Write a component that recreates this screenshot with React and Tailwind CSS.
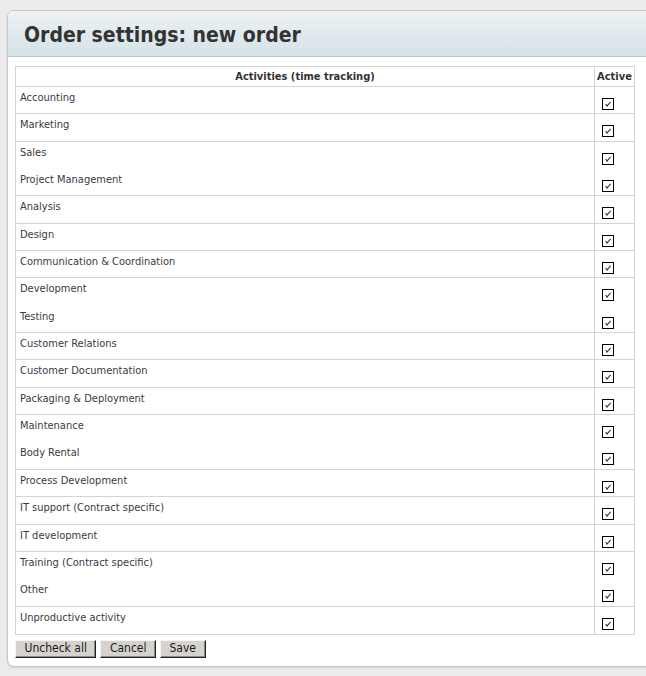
import React from "react";

const groups = [
  ["Accounting"],
  ["Marketing"],
  ["Sales", "Project Management"],
  ["Analysis"],
  ["Design"],
  ["Communication & Coordination"],
  ["Development", "Testing"],
  ["Customer Relations"],
  ["Customer Documentation"],
  ["Packaging & Deployment"],
  ["Maintenance", "Body Rental"],
  ["Process Development"],
  ["IT support (Contract specific)"],
  ["IT development"],
  ["Training (Contract specific)", "Other"],
  ["Unproductive activity"],
];

const font = { fontFamily: '"DejaVu Sans Condensed", "DejaVu Sans", sans-serif', fontStretch: "condensed" };

function Check() {
  return (
    <svg width="12" height="12" viewBox="0 0 12 12" className="block">
      <rect x="0.5" y="0.5" width="11" height="11" fill="#fff" stroke="#000" strokeWidth="1" />
      <path d="M3.5 6.2 L5.2 7.8 L8.6 3.8" fill="none" stroke="#333" strokeWidth="1.1" />
      <path d="M4.6 7.6 L5.2 8.3" fill="none" stroke="#111" strokeWidth="1.2" />
    </svg>
  );
}

function Button({ children }) {
  return (
    <button
      className="h-[18px] px-[8.5px] bg-[#d6d3ce] border-t border-l border-t-[#f4f4f4] border-l-[#f4f4f4] border-r border-b border-r-[#222] border-b-[#222] text-[12px] leading-[15px] text-[#1a1a1a] shadow-[inset_-1px_-1px_0_#8a8a8a]"
      style={font}
    >
      {children}
    </button>
  );
}

export default function App() {
  return (
    <div className="w-[646px] h-[676px] overflow-hidden bg-[#ececec] pt-[10px] pl-[7px]" style={font}>
      <div className="w-[660px] h-[657px] bg-white border border-[#c6c6c6] rounded-l-[7px] overflow-hidden shadow-[0_1px_2px_rgba(0,0,0,0.12)]">
        <div className="h-[46px] border-b border-[#b9c9cf] bg-gradient-to-b from-[#edf2f4] to-[#d6e2e7] pl-[16px] pt-[11px]">
          <h1 className="text-[21px] leading-[26px] font-bold text-[#333]">Order settings: new order</h1>
        </div>
        <div className="pl-[7px] pt-[9px]">
          <div className="w-[620px] border border-[#d4d4d4] text-[11px] leading-[13px] text-[#3a3a44]">
            <div className="flex h-[20px] border-b border-[#d4d4d4] font-bold text-[#333]">
              <div className="flex-1 border-r border-[#d4d4d4] text-center pt-[3px]">Activities (time tracking)</div>
              <div className="w-[39px] text-center pt-[3px]">Active</div>
            </div>
            {groups.map((g, gi) => (
              <div
                key={gi}
                className={
                  "flex box-border " +
                  (gi < groups.length - 1 ? "border-b border-[#d4d4d4] " : "") +
                  (g.length === 2 ? "h-[54.7px]" : "h-[27.35px]")
                }
              >
                <div className="flex-1 border-r border-[#d4d4d4]">
                  {g.map((t) => (
                    <div key={t} className="h-[27.35px] pl-[4px] pt-[4px]">{t}</div>
                  ))}
                </div>
                <div className="w-[39px]">
                  {g.map((t) => (
                    <div key={t} className="h-[27.35px] pl-[7px] pt-[11px]">
                      <Check />
                    </div>
                  ))}
                </div>
              </div>
            ))}
          </div>
          <div className="flex gap-[4px] pt-[5px]">
            <Button>Uncheck all</Button>
            <Button>Cancel</Button>
            <Button>Save</Button>
          </div>
        </div>
      </div>
    </div>
  );
}
